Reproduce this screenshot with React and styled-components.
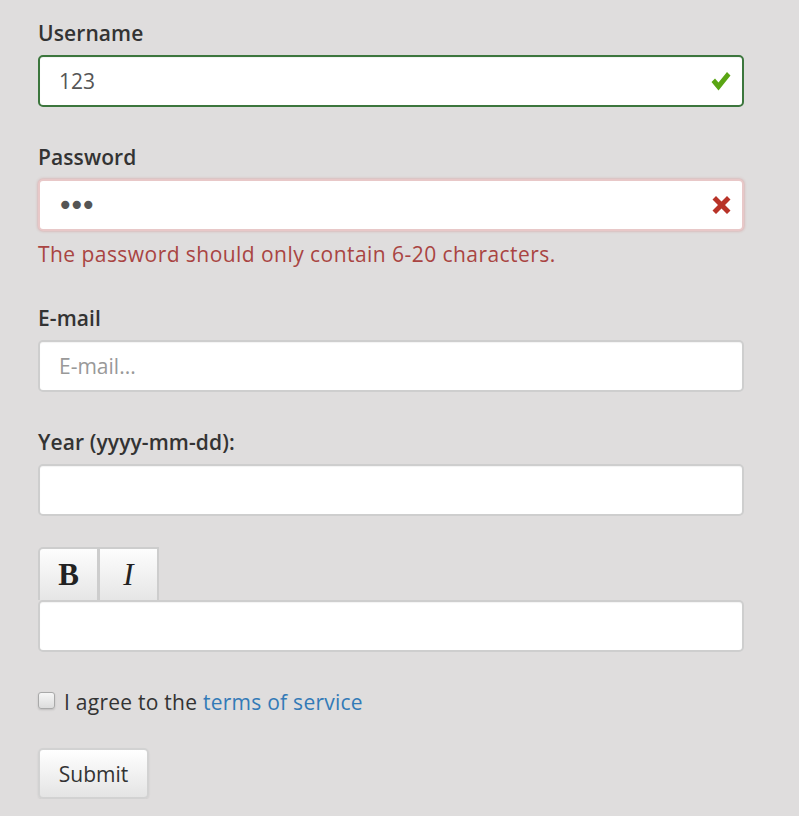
import React from 'react';
import styled, { createGlobalStyle } from 'styled-components';

const GlobalStyle = createGlobalStyle`
  html, body {
    margin: 0;
    padding: 0;
    background: #dfdddd;
  }
  body {
    font-family: "Open Sans", Lato, sans-serif;
    color: #333;
  }
`;

export default function App() {
  return (
    <>
      <GlobalStyle />
      <Form onSubmit={e => e.preventDefault()}>
        <Field>
          <Label>Username</Label>
          <InputWrap>
            <Input defaultValue='123' status='ok' />
            <StatusIcon>
              <svg width='20' height='20' viewBox='0 0 20 20'>
                <path d='M0.5 11 L4 7.5 L7.5 11.5 L16 1 L19.5 4.5 L7.5 19.5 Z' fill='#5aa514' />
              </svg>
            </StatusIcon>
          </InputWrap>
        </Field>

        <Field>
          <Label>Password</Label>
          <InputWrap>
            <Input type='password' defaultValue='123' status='error' />
            <StatusIcon>
              <svg width='19' height='19' viewBox='0 0 19 19'>
                <path
                  d='M0.5 4 L4 0.5 L9.5 6 L15 0.5 L18.5 4 L13 9.5 L18.5 15 L15 18.5 L9.5 13 L4 18.5 L0.5 15 L6 9.5 Z'
                  fill='#b83328'
                />
              </svg>
            </StatusIcon>
          </InputWrap>
          <ErrorText>The password should only contain 6-20 characters.</ErrorText>
        </Field>

        <Field>
          <Label>E-mail</Label>
          <Input placeholder='E-mail...' />
        </Field>

        <Field>
          <Label>Year (yyyy-mm-dd):</Label>
          <Input />
        </Field>

        <Field $tight>
          <Toolbar>
            <ToolButton type='button' $bold>B</ToolButton>
            <ToolButton type='button' $italic>I</ToolButton>
          </Toolbar>
          <Input />
        </Field>

        <CheckRow>
          <Check type='checkbox' />
          <span>
            I agree to the <Link href='#'>terms of service</Link>
          </span>
        </CheckRow>

        <Submit type='submit'>Submit</Submit>
      </Form>
    </>
  );
}

const Form = styled.form`
  width: 706px;
  padding: 19px 0 0 38px;
  display: flex;
  flex-direction: column;
`;

const Field = styled.div`
  display: flex;
  flex-direction: column;
  margin-bottom: ${props => (props.$tight ? '30px' : '36px')};

  &:nth-child(4) {
    margin-bottom: 31px;
  }
`;

const Label = styled.label`
  font-size: 21px;
  font-weight: 600;
  color: #333;
  line-height: 28px;
  margin-bottom: 8px;
  letter-spacing: 0.1px;
`;

const InputWrap = styled.div`
  position: relative;
`;

const Input = styled.input`
  box-sizing: border-box;
  width: 100%;
  height: 52px;
  padding: 0 19px;
  font-family: "Open Sans", Lato, sans-serif;
  font-size: 21px;
  color: #555;
  background: #fff;
  border-radius: 5px;
  outline: none;
  border: 2px solid
    ${props =>
      props.status === 'ok' ? '#3c763d' : props.status === 'error' ? '#e8c8c8' : '#cecece'};
  box-shadow: ${props =>
    props.status === 'error'
      ? '0 0 3px rgba(200, 80, 80, 0.45)'
      : 'inset 0 1px 1px rgba(0, 0, 0, 0.05)'};

  &::placeholder {
    color: #999;
  }

  &[type='password'] {
    font-family: "DejaVu Sans", sans-serif;
    font-size: 28px;
    letter-spacing: -5px;
    padding-left: 17px;
    color: #555;
  }
`;

const StatusIcon = styled.span`
  position: absolute;
  right: 13px;
  top: 50%;
  transform: translateY(-50%);
  display: flex;
`;

const ErrorText = styled.div`
  margin-top: 9px;
  font-size: 21px;
  color: #a94442;
  line-height: 28px;
  letter-spacing: 0.45px;
`;

const Toolbar = styled.div`
  display: flex;
`;

const ToolButton = styled.button`
  box-sizing: border-box;
  width: 61px;
  height: 53px;
  margin-right: -1px;
  padding: 0;
  font-family: "Liberation Serif", "DejaVu Serif", serif;
  font-size: 31px;
  font-weight: ${props => (props.$bold ? 700 : 400)};
  font-style: ${props => (props.$italic ? 'italic' : 'normal')};
  color: #222;
  background: linear-gradient(#fdfdfd, #e6e6e6);
  border: 2px solid #cdcdcd;
  border-bottom: none;
  border-radius: ${props => (props.$bold ? '5px 0 0 0' : '0')};
  cursor: pointer;
`;

const CheckRow = styled.label`
  display: flex;
  align-items: center;
  gap: 9px;
  font-size: 21px;
  color: #333;
  letter-spacing: 0.25px;
  margin-top: 6px;
  margin-bottom: 32px;
`;

const Check = styled.input`
  appearance: none;
  box-sizing: border-box;
  width: 17px;
  height: 17px;
  margin: 0 0 4px 0;
  border: 1px solid #a9a9a9;
  border-radius: 3px;
  background: linear-gradient(#f6f6f6, #dcdcdc);
  box-shadow: 0 1px 2px rgba(0, 0, 0, 0.15);
`;

const Link = styled.a`
  color: #337ab7;
  text-decoration: none;
`;

const Submit = styled.button`
  align-self: flex-start;
  width: 111px;
  height: 51px;
  font-family: "Open Sans", Lato, sans-serif;
  font-size: 21px;
  color: #333;
  background: linear-gradient(#ffffff, #e4e4e4);
  border: 2px solid #d2d2d2;
  border-radius: 5px;
  box-shadow: 0 1px 2px rgba(0, 0, 0, 0.08);
  cursor: pointer;
`;
